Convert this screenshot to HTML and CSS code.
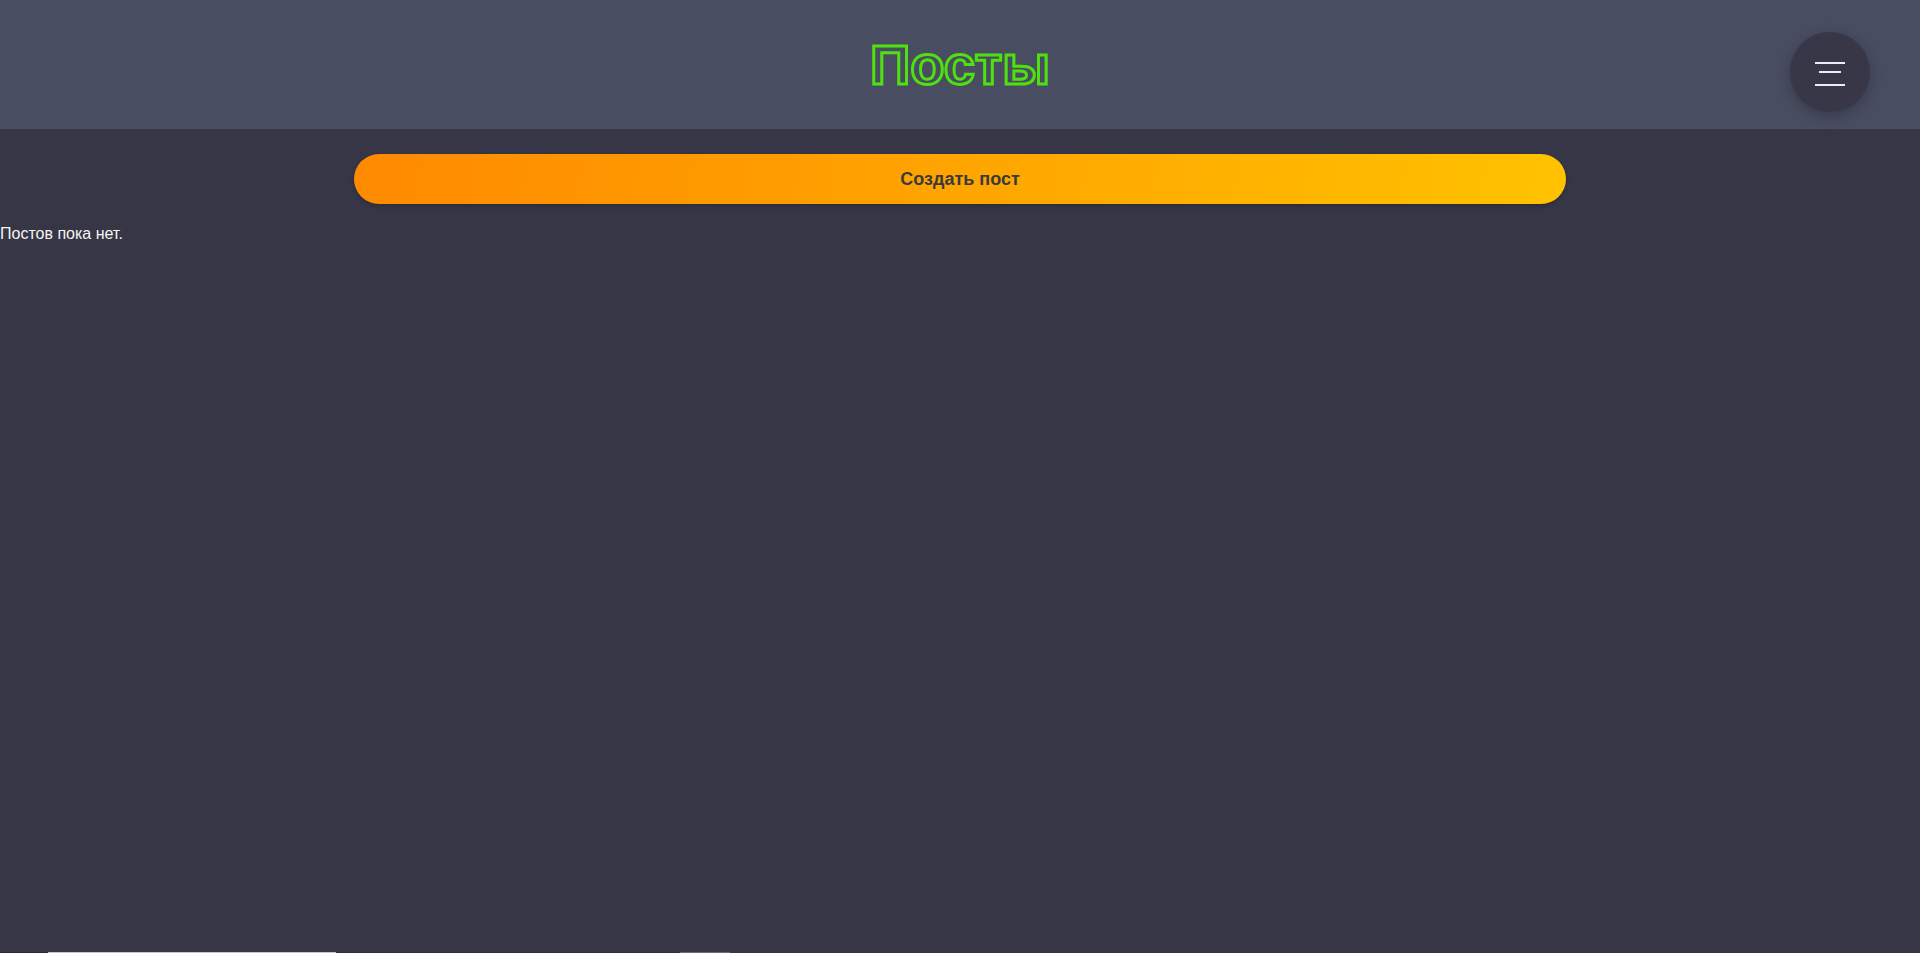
FILE: index.html
```html
<!DOCTYPE html>
<html lang="ru">
<head>
<meta charset="utf-8">
<title>Посты</title>
<link rel="stylesheet" href="styles.css">
</head>
<body>
<header class="topbar">
  <h1 class="title">Посты</h1>
  <button class="menu-btn" aria-label="Меню">
    <span class="bar bar-1"></span>
    <span class="bar bar-2"></span>
    <span class="bar bar-3"></span>
  </button>
</header>
<main class="content">
  <div class="actions">
    <button class="create-btn">Создать пост</button>
  </div>
  <p class="empty">Постов пока нет.</p>
</main>
<div class="bottom-strip">
  <span class="seg seg-a"></span>
  <span class="seg seg-b"></span>
  <span class="seg seg-c"></span>
  <span class="seg seg-d"></span>
</div>
</body>
</html>
```
FILE: styles.css
```css
* { box-sizing: border-box; }
html, body { height: 100%; }
body {
  margin: 0;
  background: #363646;
  font-family: "Liberation Sans", Arial, sans-serif;
  color: #f2f2f2;
  overflow: hidden;
}
.topbar {
  position: relative;
  height: 129px;
  background: #484d61;
  display: flex;
  align-items: center;
  justify-content: center;
}
.title {
  margin: 0;
  padding-top: 1px;
  font-size: 56px;
  font-weight: 700;
  color: transparent;
  -webkit-text-stroke: 3px #4fe010;
  line-height: 1;
}
.menu-btn {
  position: absolute;
  right: 50px;
  top: 32px;
  width: 80px;
  height: 80px;
  border: none;
  border-radius: 50%;
  background: #373748;
  box-shadow: 0 4px 14px rgba(0,0,0,0.25);
  padding: 0;
  cursor: pointer;
}
.bar {
  position: absolute;
  height: 2px;
  background: #ececf4;
  left: 25px;
  width: 30px;
}
.bar-1 { top: 30px; }
.bar-2 { top: 39px; left: 29px; width: 22px; }
.bar-3 { top: 52px; }
.content {
  padding-top: 25px;
}
.actions {
  display: flex;
  justify-content: center;
}
.create-btn {
  width: 1212px;
  height: 50px;
  border: none;
  border-radius: 25px;
  background: linear-gradient(100deg, #ff8a00 0%, #ffa200 45%, #ffc200 100%);
  box-shadow: 0 2px 4px rgba(0,0,0,0.2);
  font-family: "Liberation Sans", Arial, sans-serif;
  font-size: 18px;
  font-weight: 700;
  color: #3b3a3a;
  cursor: pointer;
}
.empty {
  margin: 21px 0 0;
  font-size: 16px;
  line-height: 18px;
  color: #f4f4f4;
}
.bottom-strip {
  position: fixed;
  left: 0;
  right: 0;
  bottom: 0;
  height: 1px;
  display: flex;
}
.seg { height: 1px; }
.seg-a { width: 48px; background: #2a2a34; }
.seg-b { width: 288px; background: #c8c8cc; }
.seg-c { width: 344px; background: #3a2a30; }
.seg-d { width: 50px; background: #6a6a72; }
```
